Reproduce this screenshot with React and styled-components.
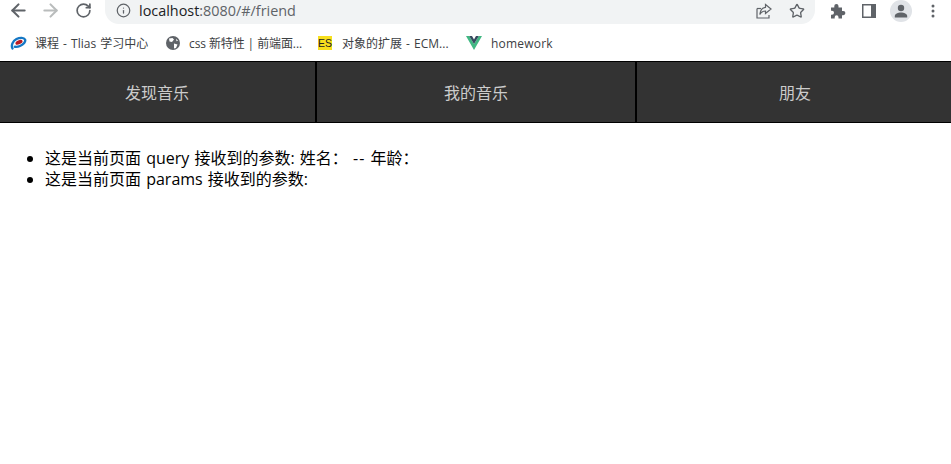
import React from 'react'
import styled, { createGlobalStyle } from 'styled-components'
import { ArrowLeft, ArrowRight, RotateCw, Info, Star } from 'lucide-react'

const Global = createGlobalStyle`
  html, body {
    margin: 0;
    padding: 0;
    background: #fff;
    font-family: "Open Sans", "Noto Sans CJK SC", sans-serif;
  }
`

const Root = styled.div`
  width: 951px;
  height: 464px;
  overflow: hidden;
  background: #fff;
`

const Toolbar = styled.div`
  height: 24px;
  display: flex;
  align-items: flex-start;
`

const NavIcons = styled.div`
  display: flex;
  align-items: center;
  height: 21px;
  gap: 11px;
  padding-left: 8px;
  width: 105px;
  box-sizing: border-box;
  flex: none;
  color: #5f6368;
`

const ReloadSlot = styled.span`
  display: flex;
  margin-left: 3px;
`

const Omnibox = styled.div`
  width: 710px;
  height: 24px;
  padding-bottom: 3px;
  box-sizing: border-box;
  display: flex;
  align-items: center;
  background: #f1f3f4;
  border-radius: 0 0 14px 14px;
  flex: none;
  color: #5f6368;
`

const InfoSlot = styled.span`
  display: flex;
  margin-left: 11px;
  margin-right: 8px;
`

const Url = styled.span`
  flex: 1;
  font-size: 14.4px;
  color: #5f6368;
  white-space: nowrap;
`

const Host = styled.span`
  color: #202124;
`

const BoxActions = styled.div`
  display: flex;
  align-items: center;
  gap: 16px;
  padding-right: 10px;
`

const Extras = styled.div`
  display: flex;
  align-items: center;
  height: 21px;
  padding-left: 15px;
  color: #5f6368;
`

const PanelSlot = styled.span`
  display: flex;
  margin-left: 16px;
`

const Avatar = styled.span`
  width: 22px;
  height: 22px;
  margin-left: 14px;
  border-radius: 50%;
  background: #e0e3e7;
  display: flex;
  align-items: center;
  justify-content: center;
`

const Menu = styled.span`
  display: flex;
  margin-left: 19px;
`

const Bookmarks = styled.div`
  height: 37px;
  display: flex;
  align-items: center;
  padding-top: 1px;
  box-sizing: border-box;
`

const Bookmark = styled.div`
  width: ${(p) => p.$width}px;
  flex: none;
  display: flex;
  align-items: center;
  gap: ${(p) => p.$gap}px;
  padding-left: ${(p) => p.$left}px;
  box-sizing: border-box;
  font-size: 12px;
  letter-spacing: ${(p) => p.$tracking || 0}px;
  word-spacing: ${(p) => p.$words || 0}px;
  color: #3c4043;
  white-space: nowrap;
`

const NavBar = styled.nav`
  display: grid;
  grid-template-columns: 317px 320px 1fr;
  height: 62px;
  box-sizing: border-box;
  background: #333;
  border-top: 1px solid #000;
  border-bottom: 1px solid #000;
`

const NavItem = styled.a`
  display: flex;
  align-items: center;
  justify-content: center;
  font-size: 16px;
  color: #ccc;
  padding-bottom: 1px;
  padding-left: ${(p) => p.$shift || 0}px;
  padding-right: ${(p) => (p.$first ? 1 : 0)}px;
  box-sizing: border-box;
  border-right: ${(p) => (p.$last ? 'none' : '2px solid #000')};
`

const Params = styled.ul`
  margin: 25px 0 0;
  padding: 0 0 0 45px;
  font-size: 16px;
  line-height: 21px;
  word-spacing: 1px;
  color: #000;
`

const Dash = styled.span`
  letter-spacing: 1px;
`

const ShareIcon = () => (
  <svg width="18" height="18" viewBox="0 0 18 18" fill="none" stroke="currentColor" strokeWidth="1.2">
    <path d="M2 6.500V16h12v-3" />
    <path d="M2 6.500h4" />
    <path d="M10.500 2.500 16 7l-5.500 4.500V9C8 9 6 10 4.800 12.500 5 8.500 7.500 5.500 10.500 5.300z" />
  </svg>
)

const PuzzleIcon = () => (
  <svg width="16" height="16" viewBox="0 0 16 16" fill="currentColor">
    <path d="M1 4.500h3.300V3a2.100 2.100 0 0 1 4.200 0v1.500h3.500V8h1.300a2.100 2.100 0 0 1 0 4.200H12V15.500H8.500v-1.300a1.900 1.900 0 0 0-3.800 0v1.300H1v-3.800h1a2 2 0 0 0 0-4H1z" />
  </svg>
)

const SidePanelIcon = () => (
  <svg width="14" height="14" viewBox="0 0 14 14">
    <rect width="14" height="14" fill="currentColor" />
    <rect x="1.500" y="1.500" width="7.500" height="11" fill="#fff" />
  </svg>
)

const ProfileIcon = () => (
  <svg width="14" height="14" viewBox="0 0 14 14" fill="#5f6368">
    <circle cx="7" cy="4" r="3.200" />
    <path d="M.8 13.500v-1.500C.8 9.800 4 8.500 7 8.500s6.200 1.300 6.200 3.500v1.500z" />
  </svg>
)

const DotsIcon = () => (
  <svg width="4" height="14" viewBox="0 0 4 14" fill="#5f6368">
    <circle cx="2" cy="2" r="1.500" />
    <circle cx="2" cy="7" r="1.500" />
    <circle cx="2" cy="12" r="1.500" />
  </svg>
)

const TliasLogo = () => (
  <svg width="17" height="14" viewBox="0 0 17 14" fill="none">
    <path d="M2.500 12.500C1 9.500 2.500 5 6.500 3c3.500-1.700 7.500-1.500 8.500.5 1 2.200-1.500 5-5 6.500-2 .9-3.800 1-5 .8" stroke="#1577c4" strokeWidth="2.400" strokeLinecap="round" />
    <ellipse cx="9" cy="6.300" rx="3.800" ry="2" transform="rotate(-25 9 6.300)" fill="#b91c24" />
  </svg>
)

const GlobeIcon = () => (
  <svg width="14" height="14" viewBox="0 0 14 14">
    <circle cx="7" cy="7" r="7" fill="#5f6368" />
    <path d="M3 2.500 6.500 2 8 3.500 6 6 3.500 5.500zM8 7.500l3.500 1L10 12l-2 .500zM10 2.800l2 2-1.500.5z" fill="#fff" />
  </svg>
)

const EsBadge = styled.span`
  width: 14px;
  height: 14px;
  flex: none;
  display: flex;
  align-items: center;
  justify-content: center;
  background: #f7df1e;
  color: #222;
  font-size: 10.500px;
  letter-spacing: 0;
  font-family: "Liberation Sans", sans-serif;
`

const VueLogo = () => (
  <svg width="16" height="14" viewBox="0 0 16 14">
    <path d="M0 0h3.200L8 8 12.800 0H16L8 14z" fill="#41b883" />
    <path d="M3.200 0h2.800L8 3.600 10 0h2.800L8 8z" fill="#35495e" />
  </svg>
)

const App = () => (
  <Root>
    <Global />
    <Toolbar>
      <NavIcons>
        <ArrowLeft size={21} strokeWidth={2.400} />
        <ArrowRight size={21} strokeWidth={2.400} color="#b9bcbc" />
        <ReloadSlot>
          <RotateCw size={17} strokeWidth={2.400} />
        </ReloadSlot>
      </NavIcons>
      <Omnibox>
        <InfoSlot>
          <Info size={15} strokeWidth={2} />
        </InfoSlot>
        <Url>
          <Host>localhost</Host>:8080/#/friend
        </Url>
        <BoxActions>
          <ShareIcon />
          <Star size={16} strokeWidth={2} />
        </BoxActions>
      </Omnibox>
      <Extras>
        <PuzzleIcon />
        <PanelSlot>
          <SidePanelIcon />
        </PanelSlot>
        <Avatar>
          <ProfileIcon />
        </Avatar>
        <Menu>
          <DotsIcon />
        </Menu>
      </Extras>
    </Toolbar>
    <Bookmarks>
      <Bookmark $width={155} $left={10} $gap={8} $words={1}>
        <TliasLogo />
        课程 - Tlias 学习中心
      </Bookmark>
      <Bookmark $width={152} $left={11} $gap={9} $tracking={-0.1}>
        <GlobeIcon />
        css 新特性 | 前端面...
      </Bookmark>
      <Bookmark $width={149} $left={11} $gap={10} $words={1}>
        <EsBadge>ES</EsBadge>
        对象的扩展 - ECM...
      </Bookmark>
      <Bookmark $width={120} $left={10} $gap={9} $tracking={0.2}>
        <VueLogo />
        homework
      </Bookmark>
    </Bookmarks>
    <NavBar>
      <NavItem $first>发现音乐</NavItem>
      <NavItem>我的音乐</NavItem>
      <NavItem $last $shift={2}>朋友</NavItem>
    </NavBar>
    <Params>
      <li>这是当前页面 query 接收到的参数: 姓名： <Dash>--</Dash> 年龄：</li>
      <li>这是当前页面 params 接收到的参数:</li>
    </Params>
  </Root>
)

export default App
